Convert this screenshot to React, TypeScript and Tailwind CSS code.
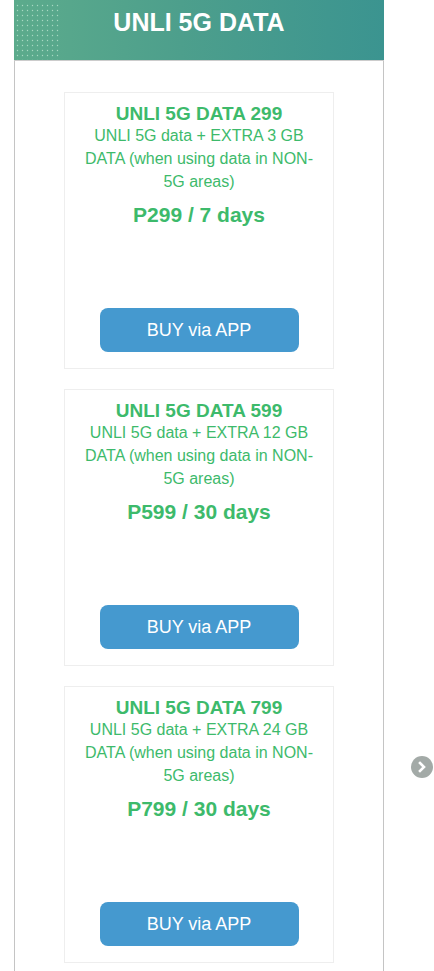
import { ReactNode } from 'react';

interface Plan {
  name: string;
  extra: string;
  price: string;
}

const plans: Plan[] = [
  { name: 'UNLI 5G DATA 299', extra: '3 GB', price: 'P299 / 7 days' },
  { name: 'UNLI 5G DATA 599', extra: '12 GB', price: 'P599 / 30 days' },
  { name: 'UNLI 5G DATA 799', extra: '24 GB', price: 'P799 / 30 days' },
];

function PlanCard({ plan }: { plan: Plan }) {
  return (
    <div className="flex h-[277px] w-[270px] flex-col items-center border border-[#eeeeee] bg-white px-[18px] pt-[10px] pb-[16px] text-center text-[#3dba6b]">
      <h3 className="text-[19px] font-bold leading-[21px]">{plan.name}</h3>
      <p className="text-[16px] leading-[23px]">
        UNLI 5G data + EXTRA {plan.extra} DATA (when using data in NON-5G areas)
      </p>
      <p className="mt-[9px] text-[21px] font-bold leading-[26px]">{plan.price}</p>
      <button className="mt-auto h-[44px] w-[199px] rounded-[8px] bg-[#4599cf] text-[18px] text-white">
        BUY via APP
      </button>
    </div>
  );
}

function Dots({ children }: { children?: ReactNode }) {
  return (
    <svg className="absolute left-[2px] top-[4px]" width="44" height="56">
      <defs>
        <pattern id="dots" width="5" height="5" patternUnits="userSpaceOnUse">
          <circle cx="1.5" cy="1.5" r="0.7" fill="#c8ecd9" />
        </pattern>
      </defs>
      <rect width="44" height="56" fill="url(#dots)" opacity="0.7" />
      {children}
    </svg>
  );
}

export default function App() {
  return (
    <div className="relative min-h-[971px] bg-white" style={{ fontFamily: '"Liberation Sans", Arial, sans-serif' }}>
      <div className="ml-[14px] w-[370px] border-x border-[#c4c4c4] pb-[10px]">
        <div className="relative -mx-px flex h-[61px] items-center justify-center border-b border-[#cccccc] bg-[linear-gradient(90deg,#5cab8c_0%,#4d9f8c_45%,#3b9490_100%)]">
          <Dots />
          <h2 className="relative -mt-[15px] text-[25px] font-bold text-white">UNLI 5G DATA</h2>
        </div>
        <div className="mt-[31px] flex flex-col items-center gap-[20px]">
          {plans.map((p) => (
            <PlanCard key={p.name} plan={p} />
          ))}
        </div>
      </div>
      <div className="absolute left-[411px] top-[756px] flex h-[22px] w-[22px] items-center justify-center rounded-full bg-[#a3aaa7]">
        <svg width="12" height="12" viewBox="0 0 12 12">
          <path d="M4 2 L8 6 L4 10" fill="none" stroke="white" strokeWidth="2.6" strokeLinecap="square" />
        </svg>
      </div>
    </div>
  );
}
